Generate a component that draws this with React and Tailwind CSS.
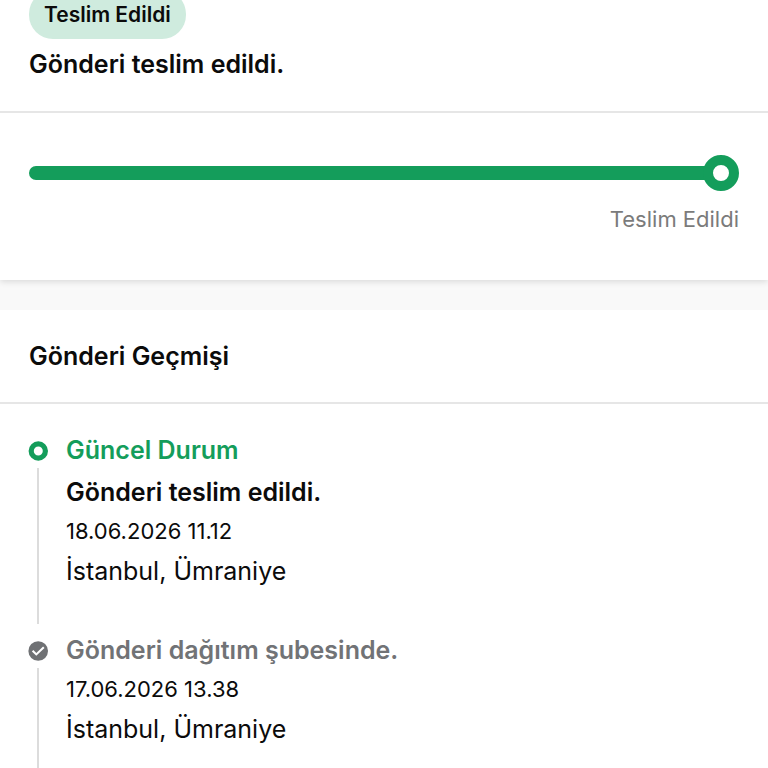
import React from 'react'

const HISTORY = [
  {
    current: true,
    title: 'Gönderi teslim edildi.',
    date: '18.06.2026 11.12',
    place: 'İstanbul, Ümraniye',
  },
  {
    current: false,
    title: 'Gönderi dağıtım şubesinde.',
    date: '17.06.2026 13.38',
    place: 'İstanbul, Ümraniye',
  },
]

function CurrentIcon() {
  return (
    <svg viewBox="0 0 20 20" className="size-5" aria-hidden="true">
      <circle cx="10.3" cy="10" r="7.1" fill="#fff" stroke="#149d5b" strokeWidth="5.2" />
    </svg>
  )
}

function DoneIcon() {
  return (
    <svg viewBox="0 0 20 20" className="size-5" aria-hidden="true">
      <circle cx="10.2" cy="10" r="9.8" fill="#6f7174" />
      <path d="M4.6 9.8 8.3 13.4 15.8 6.2" fill="none" stroke="#fff" strokeWidth="2.1" />
    </svg>
  )
}

function HistoryItem({ current, title, date, place }) {
  return (
    <li className="flex gap-[18px]">
      <div className="flex w-5 shrink-0 flex-col items-center gap-[7px] pt-2">
        {current ? <CurrentIcon /> : <DoneIcon />}
        <span className="w-0.5 flex-1 bg-[#dcdcdc]" />
      </div>
      <div className="pb-9">
        {current && <p className="mb-2 text-[25px] leading-[34px] font-semibold text-[#149d5b]">Güncel Durum</p>}
        <h3 className={`text-[25px] leading-[34px] font-semibold ${current ? 'text-[#0b0b0b]' : 'text-[#717376]'}`}>
          {title}
        </h3>
        <p className="mt-1.5 text-[22px] leading-[32px]">{date}</p>
        <p className="mt-[7px] text-[25px] leading-[34px]">{place}</p>
      </div>
    </li>
  )
}

export default function App() {
  return (
    <main className="h-screen overflow-hidden bg-[#f9f9f9] font-['Inter',sans-serif] text-[#0b0b0b]">
      {/* Status */}
      <section className="bg-white shadow-[0_2px_6px_rgba(0,0,0,0.12)]">
        <header className="border-b-2 border-[#e6e6e6] px-[29px] pb-[30px]">
          <span className="-mt-2.5 block w-fit rounded-3xl bg-[#cfebde] px-[15px] py-2 text-[21px] leading-[33px] font-semibold">
            Teslim Edildi
          </span>
          <h1 className="mt-2 text-[25px] leading-[34px] font-semibold">Gönderi teslim edildi.</h1>
        </header>
        <div className="px-[29px] pt-[42px] pb-11">
          <div className="flex items-center">
            <span className="-mr-1 h-[14px] flex-1 rounded-l-full bg-[#149d5b]" />
            <span className="size-9 rounded-full border-10 border-[#149d5b] bg-white" />
          </div>
          <p className="mt-[11px] text-right text-[22px] leading-[34px] text-[#7b7b7b]">Teslim Edildi</p>
        </div>
      </section>

      {/* History */}
      <section className="mt-[30px] bg-white">
        <h2 className="border-b-2 border-[#e6e6e6] px-[29px] py-[29px] text-[25px] leading-[34px] font-semibold">
          Gönderi Geçmişi
        </h2>
        <ol className="flex flex-col gap-[9px] px-[28px] pt-[29px]">
          {HISTORY.map((item) => (
            <HistoryItem key={item.date} {...item} />
          ))}
        </ol>
      </section>
    </main>
  )
}
